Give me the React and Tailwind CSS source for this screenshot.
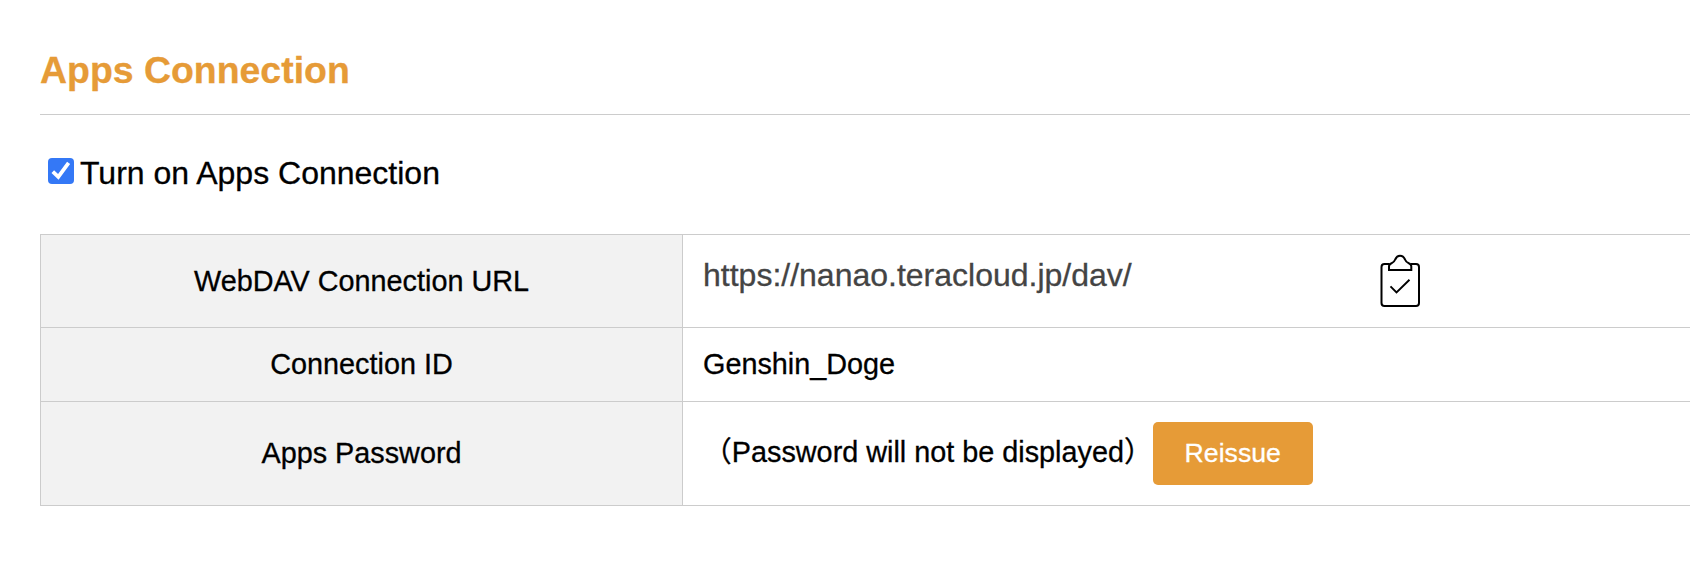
function ClipboardIcon() {
  return (
    <svg width="42" height="54" viewBox="0 0 42 54" fill="none" stroke="#000" strokeWidth="2" aria-hidden="true">
      <path d="M9.500 10H4.500Q1.500 10 1.500 13V49Q1.500 52 4.500 52H36Q39 52 39 49V13Q39 10 36 10H31" />
      <path d="M9 16V12.500Q9 10.200 11.500 9.300Q14.200 8.200 15.200 5.500Q16.800 1.800 20 1.800Q23.400 1.800 25 5.500Q26 8.200 28.800 9.300Q31.300 10.200 31.300 12.500V16Z" />
      <path d="M10.500 32.300L16.500 38.500L29.500 25.800" strokeWidth="1.900" />
    </svg>
  );
}

function Checkbox() {
  return (
    <span role="checkbox" aria-checked="true" className="flex size-[26px] items-center justify-center rounded-[4px] bg-[#3478f6]">
      <svg width="26" height="26" viewBox="0 0 26 26" fill="none" stroke="#fff" strokeWidth="3.8">
        <path d="M4.800 13.600L10.300 18.800L20.600 4.800" />
      </svg>
    </span>
  );
}

function Row({ label, className, labelClass, children }) {
  return (
    <div className={`flex border-b border-[#ccc] ${className}`}>
      <div className="flex w-[643px] shrink-0 items-center justify-center border-x border-[#ccc] bg-[#f2f2f2]">
        <span className={labelClass}>{label}</span>
      </div>
      <div className="flex grow pl-5">{children}</div>
    </div>
  );
}

export default function App() {
  return (
    <main className="h-[586px] w-full overflow-hidden bg-white pl-10 font-['Liberation_Sans','Noto_Sans_CJK_JP',sans-serif] text-[28.8px] leading-8 whitespace-nowrap text-black [-webkit-text-stroke:0.3px]">
      <h3 className="h-[115px] border-b border-[#ccc] pt-[50px] text-[37.44px] leading-10 font-bold text-[#e69b37]">Apps Connection</h3>
      <label className="flex h-[69px] pt-[43px] pl-2">
        <Checkbox />
        <span className="-mt-px pl-1.5 text-[32px] leading-8">Turn on Apps Connection</span>
      </label>
      <section className="mt-[50px] border-t border-[#ccc]">
        <Row label="WebDAV Connection URL" className="h-[93px]" labelClass="pb-px">
          <span className="w-[677px] pt-6 text-[32px] text-[#444]">https://nanao.teracloud.jp/dav/</span>
          <span className="pt-[19px]"><ClipboardIcon /></span>
        </Row>
        <Row label="Connection ID" className="h-[74px]" labelClass="pb-0.5">
          <span className="self-center pb-0.5">Genshin_Doge</span>
        </Row>
        <Row label="Apps Password" className="h-[104px]" labelClass="pb-0.5">
          <span className="self-center pb-[3px]">（Password will not be displayed）</span>
          <button className="h-[63px] w-40 self-center rounded-[5px] bg-[#e69b37] pb-0.5 text-[26.67px] text-white">Reissue</button>
        </Row>
      </section>
    </main>
  );
}
